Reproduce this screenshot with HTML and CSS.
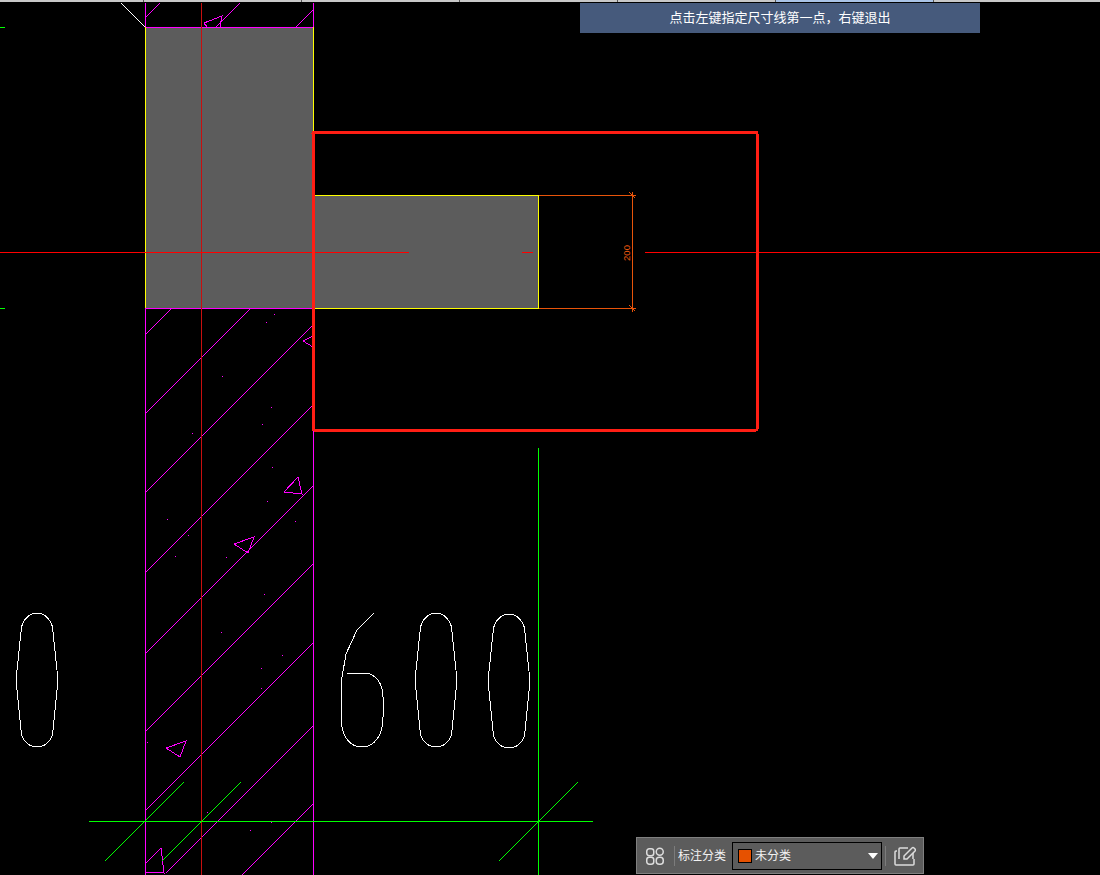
FILE: index.html
```html
<!DOCTYPE html>
<html lang="zh-CN">
<head>
    <meta charset="UTF-8">
    <meta name="viewport" content="width=device-width, initial-scale=1.0">
    <title>标注</title>
    <link rel="stylesheet" href="styles.css">
</head>
<body>
    <div class="tabs">
        <div class="tab first"></div>
        <div class="tab"></div>
        <div class="tab"></div>
        <div class="tab"></div>
        <div class="tab"></div>
        <div class="tab active"></div>
        <div class="tab last"></div>
    </div>
    <main class="viewport">
        <svg class="drawing" width="1100" height="875" viewBox="0 0 1100 875">
            <!-- filled wall sections -->
            <rect class="wall" x="145" y="27" width="169" height="281"/>
            <rect class="wall" x="313" y="195" width="225" height="113"/>

            <!-- hatch -->
            <path class="magenta" d="M145 18L160 3M216 27L240 3M296 27L313 10M145 335L172 308M145 414L251 308M145 493L313 325M145 573L313 405M145 654L313 486M145 732L313 564M145 811L313 643M166 873L313 726M242 875L313 804M145 864L161 848"/>
            <path class="magenta" d="M145.500 3V27M313.500 3V27M145.500 308V875M313.500 430V875M145 27.500H313M145 308.500H313"/>

            <!-- arrow marks -->
            <path class="magenta" d="M220 27L222 16L204 23L207 27"/>
            <path class="magenta" d="M313 336L303 341L313 347"/>
            <path class="magenta" d="M284 492L298 477L302 494Z"/>
            <path class="magenta" d="M234 544L254 537L248 553Z"/>
            <path class="magenta" d="M166 748L186 741L180 757Z"/>
            <path class="magenta" d="M161 848L164 873L145 872"/>

            <!-- specks -->
            <g class="specks">
                <rect x="274" y="314" width="1" height="1"/><rect x="266" y="322" width="1" height="1"/>
                <rect x="222" y="376" width="1" height="1"/><rect x="271" y="407" width="1" height="1"/>
                <rect x="262" y="424" width="1" height="1"/><rect x="192" y="433" width="1" height="1"/>
                <rect x="272" y="467" width="1" height="1"/><rect x="267" y="501" width="1" height="1"/>
                <rect x="295" y="521" width="1" height="1"/><rect x="167" y="519" width="1" height="1"/>
                <rect x="188" y="535" width="1" height="1"/><rect x="175" y="556" width="1" height="1"/>
                <rect x="226" y="557" width="1" height="1"/><rect x="264" y="594" width="1" height="1"/>
                <rect x="221" y="632" width="1" height="1"/><rect x="282" y="655" width="1" height="1"/>
                <rect x="261" y="668" width="1" height="1"/><rect x="261" y="688" width="1" height="1"/>
                <rect x="147" y="742" width="1" height="1"/><rect x="207" y="812" width="1" height="1"/>
                <rect x="257" y="781" width="1" height="1"/><rect x="271" y="822" width="1" height="1"/>
                <rect x="250" y="830" width="1" height="1"/>
            </g>

            <!-- axes -->
            <path class="axis-dim" d="M201.500 3V875"/>
            <path class="green" d="M538.500 448V875M89 821.500H593M0 27.500H5M0 308.500H5"/>
            <path class="green" d="M105 861L184 782M162 861L241 782M499 861L578 782"/>
            <path class="white" d="M121 3L145 27"/>

            <!-- wall outline -->
            <path class="yellow" d="M145.500 27V308M313.500 27V132M313 195.500H538.500V308.500H313"/>

            <!-- dimension -->
            <path class="dim" d="M539 195.500H636M539 308.500H636M632.500 192V312M629 192L635 198M629 305L635 311"/>
            <text class="dim-text" transform="translate(630 253) rotate(-90)" text-anchor="middle">200</text>

            <path class="axis" d="M0 252.500H409M522 252.500H533M645 252.500H1100"/>

            <!-- big label -->
            <g class="white">
                <path d="M37 613C28 613 21 622 21 632L16 680L21 730C21 738 27 747 37 747C47 747 53 738 53 730L58 680L53 632C53 622 46 613 37 613Z"/>
                <path d="M374 613L357 630L346 654L341 683V717C341 738 351 747 362 747C374 747 383 736 383 717V697C383 684 376 673 364 673H347"/>
                <path d="M436 613C427 613 420 622 420 632L415 680L420 730C420 738 426 747 436 747C446 747 452 738 452 730L457 680L452 632C452 622 445 613 436 613Z"/>
                <path d="M509 614C500 614 493 623 493 633L488 681L493 731C493 739 499 748 509 748C519 748 525 739 525 731L530 681L525 633C525 623 518 614 509 614Z"/>
            </g>

            <!-- selection box -->
            <rect class="selection" x="313" y="132.500" width="444" height="297.500" rx="1"/>
        </svg>

        <div class="hint">点击左键指定尺寸线第一点，右键退出</div>

        <div class="toolbar">
            <svg class="icon" width="20" height="18" viewBox="0 0 20 18">
                <rect x="1.750" y="1.750" width="7" height="7" rx="2.500"/>
                <rect x="11.250" y="1.250" width="7" height="7" rx="3.500"/>
                <rect x="1.750" y="10.250" width="7" height="7" rx="2.500"/>
                <rect x="11.250" y="10.250" width="7" height="7" rx="3"/>
            </svg>
            <span class="divider"></span>
            <span class="label">标注分类</span>
            <div class="select">
                <span class="swatch"></span>
                <span class="select-text">未分类</span>
                <span class="caret"></span>
            </div>
            <span class="divider"></span>
            <svg class="icon" width="22" height="22" viewBox="0 0 22 22">
                <path d="M3 6H2a1 1 0 0 0-1 1v12a1 1 0 0 0 1 1h17a1 1 0 0 0 1-1v-5"/>
                <path d="M5 14V4a1 1 0 0 1 1-1h8M19 8v6"/>
                <path d="M10 14v-3l8-8a1.500 1.500 0 0 1 2 0l1 1a1.500 1.500 0 0 1 0 2l-8 8z"/>
            </svg>
        </div>
    </main>
</body>
</html>
```

FILE: styles.css
```css
* {
    margin: 0;
    padding: 0;
    box-sizing: border-box;
}

html, body {
    height: 100%;
    overflow: hidden;
    background-color: #000;
}

body {
    font-family: "Liberation Sans", "Noto Sans CJK SC", sans-serif;
}

.tabs {
    display: flex;
    height: 2px;
    background-color: #b4b4b4;
}

.tab {
    width: 158px;
    background-color: #c8c8c8;
    border-right: 1px solid #555;
}

.tab.first {
    width: 144px;
}

.tab.active {
    background-color: #a9c3e6;
}

.tab.last {
    flex: 1;
    border-right: none;
}

.viewport {
    position: relative;
    width: 1100px;
    height: 873px;
}

.drawing {
    position: absolute;
    top: -2px;
    left: 0;
    shape-rendering: crispEdges;
}

.drawing path {
    fill: none;
    stroke-width: 1;
}

.wall {
    fill: #5c5c5c;
}

.magenta {
    stroke: #f0f;
}

.specks {
    fill: #f0f;
}

.axis {
    stroke: #f00;
}

.axis-dim {
    stroke: #c80f0f;
}

.green {
    stroke: #0f0;
}

.white,
.white path {
    stroke: #fff;
}

.yellow {
    stroke: #ff0;
}

.dim {
    stroke: #e8540a;
}

.dim-text {
    font-family: "Liberation Sans", sans-serif;
    font-size: 9.500px;
    fill: #f05a0f;
}

.selection {
    fill: none;
    stroke: #ff1e14;
    stroke-width: 3;
}

.hint {
    position: absolute;
    top: 1px;
    left: 580px;
    width: 400px;
    height: 30px;
    line-height: 30px;
    text-align: center;
    font-size: 13px;
    color: #fff;
    background-color: #465a7c;
}

.toolbar {
    position: absolute;
    top: 835px;
    left: 636px;
    width: 288px;
    height: 37px;
    display: flex;
    align-items: center;
    padding-left: 8px;
    background-color: #5c5c5c;
    border: 1px solid #808080;
}

.icon {
    flex: none;
    fill: none;
    stroke: #dcdcdc;
    stroke-width: 1.5;
}

.divider {
    width: 1px;
    height: 20px;
    margin: 0 3px 0 9px;
    background-color: #7c7c7c;
}

.label {
    padding-bottom: 2px;
    font-size: 12px;
    color: #f2f2f2;
}

.select {
    width: 150px;
    height: 28px;
    margin-left: 6px;
    display: flex;
    align-items: center;
    padding: 0 3px 0 5px;
    border: 1px solid #000;
    background-color: #5c5c5c;
}

.swatch {
    width: 14px;
    height: 14px;
    background-color: #e65100;
    border: 1px solid #000;
}

.select-text {
    flex: 1;
    margin-left: 3px;
    padding-bottom: 2px;
    font-size: 12px;
    color: #f2f2f2;
}

.caret {
    width: 0;
    height: 0;
    border-left: 5px solid transparent;
    border-right: 5px solid transparent;
    border-top: 6px solid #fff;
}

.toolbar .select + .divider {
    margin: 0 8px 0 3px;
}
```
